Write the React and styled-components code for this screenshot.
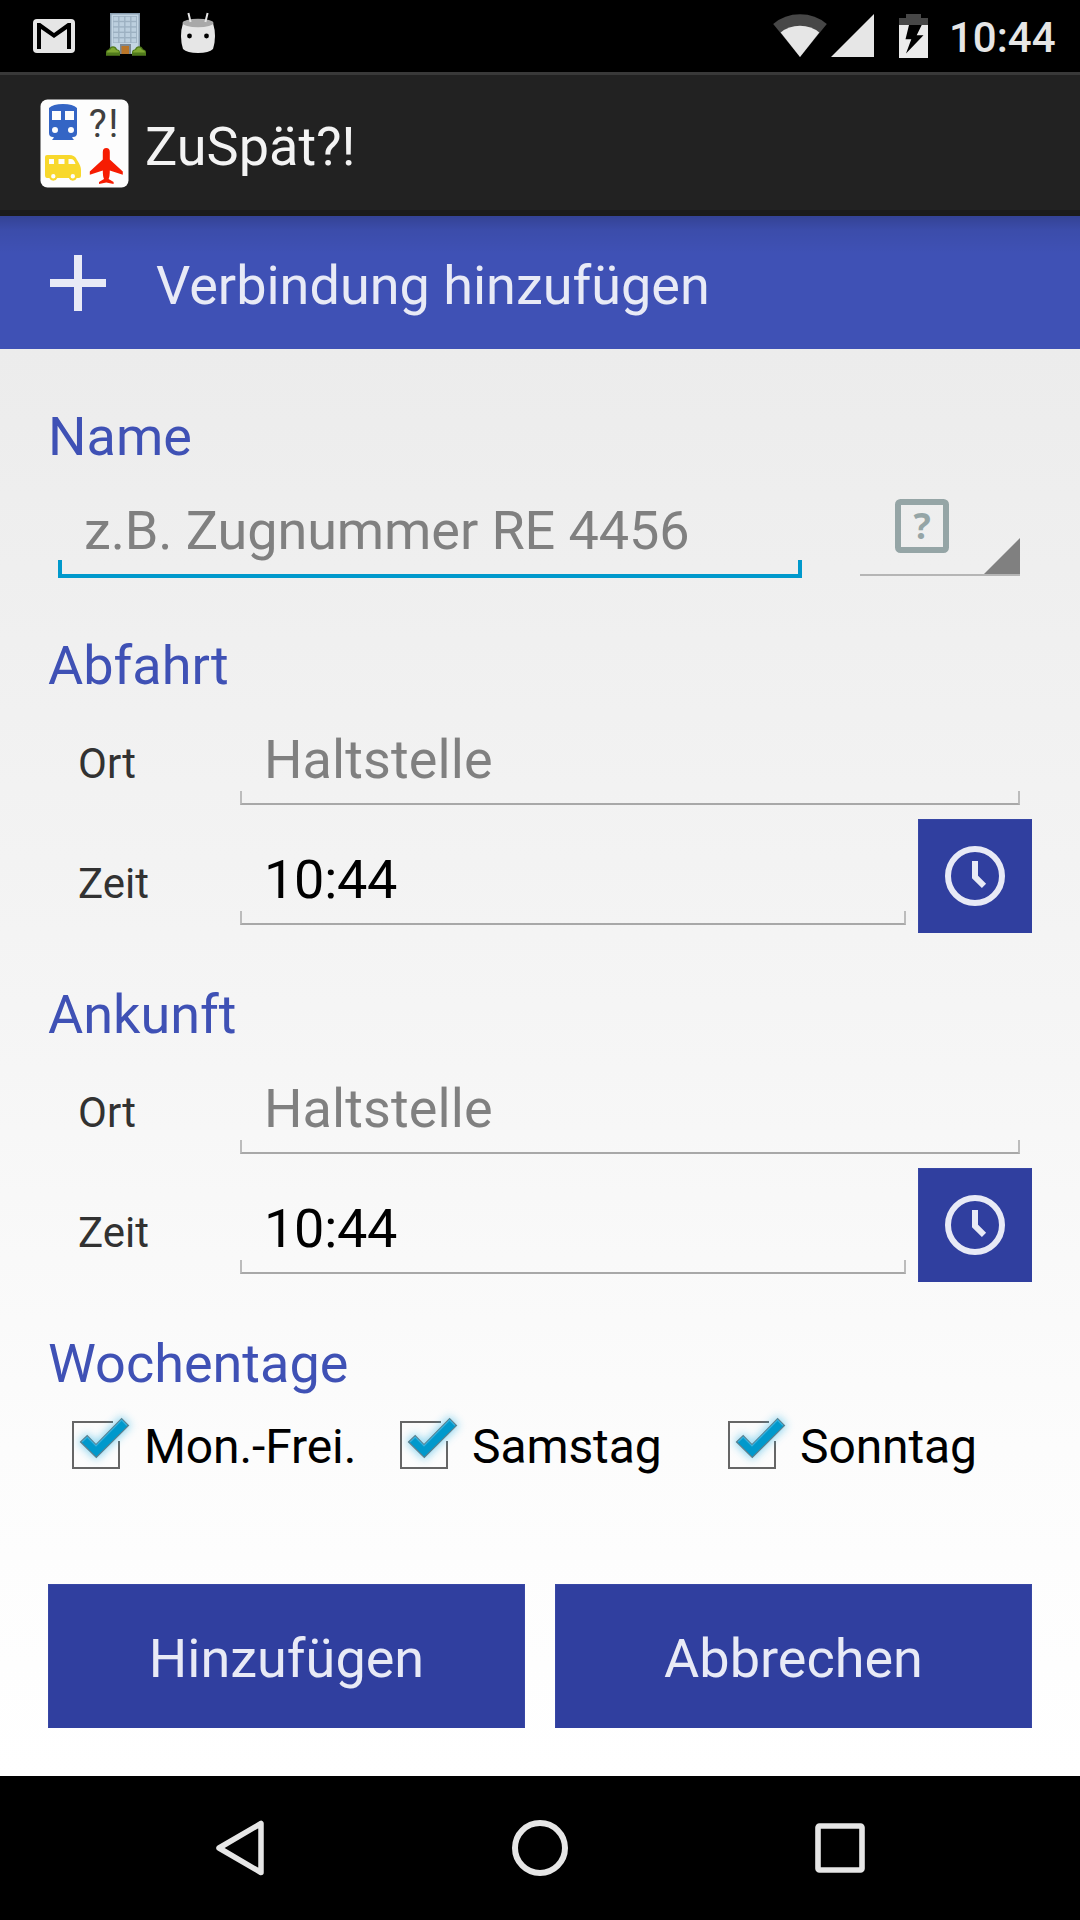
import React from "react";
import styled, { createGlobalStyle } from "styled-components";

const GlobalStyle = createGlobalStyle`
  * { box-sizing: border-box; }
  body { margin: 0; background: #000; font-family: Roboto, "Noto Sans", sans-serif; }
  svg { display: block; flex: none; }
`;

const Screen = styled.div`
  width: 1080px;
  height: 1920px;
  display: flex;
  flex-direction: column;
  overflow: hidden;
`;

const StatusBar = styled.div`
  height: 72px;
  display: flex;
  justify-content: space-between;
  padding: 0 24px 0 33px;
  background: #000;
`;

const IconGroup = styled.div`
  display: flex;
  gap: ${(p) => p.$gap}px;
`;

const Clock = styled.span`
  width: 107px;
  margin-left: -4px;
  font-size: 42px;
  font-weight: 500;
  line-height: 75px;
  color: #e6e6e6;
  white-space: nowrap;
`;

const ActionBar = styled.header`
  height: 144px;
  display: flex;
  align-items: center;
  gap: 16px;
  padding: 2px 40px 0;
  background: #222;
  border-top: 3px solid #393939;
  border-bottom: 6px solid #1b1b1b;
`;

const AppTitle = styled.h1`
  margin: 7px 0 0;
  font-size: 54px;
  font-weight: 400;
  line-height: 64px;
  color: #f3f3f3;
`;

const PageHeader = styled.div`
  height: 133px;
  display: flex;
  align-items: center;
  gap: 50px;
  padding: 0 50px;
  background: linear-gradient(rgba(0, 0, 0, 0.18), rgba(0, 0, 0, 0.06) 14px, transparent 38px) #3f51b5;
`;

const PageTitle = styled.h2`
  margin: 7px 0 0;
  font-size: 54px;
  font-weight: 400;
  line-height: 64px;
  color: #e8eaf6;
`;

const Form = styled.main`
  height: 1427px;
  padding: 55px 48px 0;
  background: linear-gradient(#ececec, #f5f5f5 46%, #fcfcfc 77%, #fff);
`;

const Section = styled.section`
  margin-bottom: ${(p) => p.$space ?? 43}px;
`;

const Heading = styled.h3`
  margin: 0;
  font-size: 54px;
  font-weight: 400;
  line-height: 65px;
  color: #3f51b5;
`;

const NameRow = styled.div`
  height: 121px;
  display: flex;
  align-items: flex-end;
  padding: 0 12px 12px 10px;
  gap: 58px;
`;

const Rows = styled.div`
  padding-top: 1px;
`;

const Row = styled.div`
  height: 120px;
  display: flex;
  align-items: flex-start;
  padding-left: 30px;
  padding-right: ${(p) => p.$right ?? 0}px;
`;

const Label = styled.label`
  width: 162px;
  padding-top: 33px;
  font-size: 42px;
  line-height: 63px;
  color: #323232;
`;

const Field = styled.div`
  position: relative;
  flex: ${(p) => (p.$width ? "none" : 1)};
  width: ${(p) => (p.$width ? `${p.$width}px` : "auto")};
  height: ${(p) => (p.$focused ? 79 : 106)}px;
  padding-top: ${(p) => (p.$focused ? 0 : 29)}px;
  padding-left: ${(p) => (p.$focused ? 26 : 24)}px;
  font-size: 54px;
  line-height: 63px;
  letter-spacing: ${(p) => p.$tracking ?? 0}px;
  white-space: nowrap;
  color: ${(p) => (p.$filled ? "#000" : "#808080")};

  &::after {
    content: "";
    position: absolute;
    left: 0;
    right: 0;
    bottom: 0;
    height: ${(p) => (p.$focused ? 14 : 12)}px;
    border: solid ${(p) => (p.$focused ? "#0099cc" : "#bcbcbc")};
    border-width: ${(p) => (p.$focused ? "0 4px 4px" : "0 2px 2px")};
    border-bottom-color: ${(p) => (p.$focused ? "#0099cc" : "#a8a8a8")};
  }
`;

const Spinner = styled.div`
  width: 160px;
  height: 79px;
`;

const ClockButton = styled.button`
  width: 114px;
  height: 114px;
  margin-left: 12px;
  padding: 0;
  border: 1px solid #3847a5;
  border-right-color: #303f9f;
  border-bottom-color: #303f9f;
  background: #303f9f;
  display: flex;
  align-items: center;
  justify-content: center;
`;

const Days = styled.div`
  height: 98px;
  display: grid;
  grid-template-columns: repeat(3, 328px);
`;

const Day = styled.label`
  display: flex;
  align-items: center;
  padding-left: 24px;
  gap: 4px;
  font-size: 48px;
  line-height: 64px;
  letter-spacing: -0.1px;
  color: #000;

  span { margin-top: 3px; }
`;

const Actions = styled.div`
  display: grid;
  grid-template-columns: 1fr 1fr;
  gap: 30px;
`;

const ActionButton = styled.button`
  height: 144px;
  border: 1px solid #3847a5;
  border-bottom-color: #303f9f;
  background: #303f9f;
  padding: 5px 0 0;
  font: 400 54px/64px Roboto, "Noto Sans", sans-serif;
  color: #e8eaf6;
`;

const NavBar = styled.nav`
  height: 144px;
  display: flex;
  align-items: center;
  justify-content: center;
  gap: 240px;
  background: #000;
`;

const GmailIcon = () => (
  <svg width="42" height="72" viewBox="33 0 42 72">
    <rect x="33" y="19" width="42" height="34" rx="4" fill="#e6e6e6" />
    <path d="M37 49V23h3.200L54 33l13.800-10H71v26h-4V29L54 38 41 29v20z" fill="#000" />
  </svg>
);

const BuildingIcon = () => (
  <svg width="44" height="72" viewBox="106 0 44 72">
    <rect x="110" y="13" width="30" height="41" fill="#8b9fb1" />
    <rect x="111.500" y="14.500" width="27" height="39" fill="#c3d5e3" />
    <rect x="113" y="16" width="24" height="27" fill="#9db1c2" />
    {[0, 1, 2, 3, 4].map((r) =>
      [0, 1, 2, 3].map((c) => (
        <rect key={`${r}-${c}`} x={113.5 + c * 6} y={16.8 + r * 5.4} width="4.600" height="4" fill="#bccfde" />
      ))
    )}
    <rect x="120" y="44" width="11" height="10" fill="#7c8893" />
    <rect x="121.500" y="46" width="7.500" height="8" fill="#b97528" />
    <path d="M106 55.800v-4q0-2 3-2.600 1-3 4-3t4 3q3 .6 3 3v3.600zM132 55.800v-3.600q0-2.400 3-3 1-3 4-3t4 3q3 .6 3 2.600v4z" fill="#507a1c" />
    <path d="M107 52.500q0-2 3-2.500 1-2.500 3-2.500t3 2.500q3 .5 3 2.500zM133 52.500q0-2 3-2.500 1-2.500 3-2.500t3 2.500q3 .5 3 2.500z" fill="#7fa832" />
  </svg>
);

const RobotIcon = () => (
  <svg width="34" height="72" viewBox="181 0 34 72">
    <path d="M183 23q-4 13 0 26 4 4 15 4t15-4q4-13 0-26z" fill="#e6e6e6" />
    <ellipse cx="198" cy="23" rx="15.500" ry="4.200" fill="#a9a9a9" />
    <path d="M188.400 13l2.200 9M207.600 13l-2.200 9" stroke="#e6e6e6" strokeWidth="2" />
    <circle cx="189.500" cy="36" r="2.400" />
    <circle cx="206.500" cy="36" r="2.400" />
  </svg>
);

const WifiIcon = () => (
  <svg width="54" height="72" viewBox="772.500 0 54 72">
    <path d="M799.500 57L772.700 24Q784 14.300 799.500 14.300T826.300 24z" fill="#474747" />
    <path d="M799.500 57L780.200 32.500Q788 25.700 799.500 25.700T818.800 32.500z" fill="#e6e6e6" />
  </svg>
);

const SignalIcon = () => (
  <svg width="43" height="72" viewBox="831 0 43 72">
    <path d="M831 57h43V14z" fill="#e6e6e6" />
  </svg>
);

const BatteryIcon = () => (
  <svg width="29" height="72" viewBox="899 0 29 72">
    <path d="M899 25.500V18h7v-4h15v4h7v7.500z" fill="#474747" />
    <path d="M899 25h29v33h-29z" fill="#ebebeb" />
    <path d="M909 25h12.700l-5 10.300h6.800L906 53.500l5.300-14.200h-5.800z" fill="#000" />
  </svg>
);

const AppIcon = () => (
  <svg width="89" height="89" viewBox="40 99 89 89">
    <rect x="40.500" y="99.500" width="88" height="88" rx="7" fill="#fdfdfd" />
    <path
      fill="#3465c5"
      fillRule="evenodd"
      d="M49 108q4-4 14-4t14 4v25q0 4-4 4l-1 .5 2 2.500H52l2-2.500-1-.5q-4 0-4-4zM52 111v9h9v-9zM65 111v9h9v-9zM55 127a3 3 0 100 6 3 3 0 000-6zM71 127a3 3 0 100 6 3 3 0 000-6z"
    />
    <text x="88.700" y="137" fontSize="38" letterSpacing="1.800" fill="#404040" fontFamily="Roboto">?!</text>
    <path
      fill="#f8d82c"
      fillRule="evenodd"
      d="M45 157q0-2 2-2h22q6 0 8 5 4 6 4 10v6q0 2-2 2h-2.200a4.300 4.300 0 01-8 0H57.300a4.300 4.300 0 01-8 0H47q-2 0-2-3zM49 159v5h5v-5zM58.500 159v5h6v-5zM68.500 159v5h7q-1.500-5-4.500-5zM53.300 174a2 2 0 100 4.400 2 2 0 000-4.400zM72.800 174a2 2 0 100 4.400 2 2 0 000-4.400z"
    />
    <path
      fill="#f61c02"
      d="M106.300 148q3.500 0 3.500 4v7.500l13 12v3.300l-13-4.300q0 6-1.200 8.500l5 3v2l-7.300-1.500-7.300 1.500v-2l5-3q-1.200-2.500-1.200-8.500l-13 4.300v-3.300l13-12V152q0-4 3.500-4z"
    />
  </svg>
);

const PlusIcon = () => (
  <svg width="56" height="56" viewBox="0 0 56 56">
    <path d="M24 0h8v24h24v8H32v24h-8V32H0v-8h24z" fill="#e8eaf6" />
  </svg>
);

const SpinnerArt = () => (
  <svg width="160" height="79" viewBox="860 499 160 79">
    <rect x="898" y="502" width="48" height="48" rx="2.500" fill="none" stroke="#95a5a6" strokeWidth="6" />
    <text x="922.200" y="538.700" fontSize="36" fontWeight="700" textAnchor="middle" fill="#95a5a6" fontFamily="Noto Sans">?</text>
    <path d="M984 574l36-36v36z" fill="#808080" />
    <path d="M860 574h160v2H860z" fill="#b5b5b5" />
  </svg>
);

const ClockIcon = () => (
  <svg width="60" height="60" viewBox="0 0 60 60" fill="none" stroke="#e8eaf6" strokeWidth="6">
    <circle cx="30" cy="30" r="27" />
    <path d="M30 15v16l9 8.800" />
  </svg>
);

const CheckIcon = () => (
  <svg width="68" height="74" viewBox="0 0 68 74" fill="none">
    <defs>
      <filter id="glow" x="-50%" y="-50%" width="200%" height="200%">
        <feGaussianBlur stdDeviation="4.500" />
      </filter>
    </defs>
    <path d="M41 14H1v46h46V33" stroke="#666" strokeWidth="2" />
    <path d="M8 34l7-7 9 9 25.500-26 7.500 7.500L24.300 50z" fill="#33b5e5" stroke="#33b5e5" strokeWidth="3" opacity=".55" filter="url(#glow)" />
    <path d="M8.500 34l6.700-6.300 8.800 9L49.600 10.700l6.900 6.900L24.300 49.500z" fill="#0099cc" stroke="#5f7f8c" strokeWidth="1.200" />
    <path d="M10 34l5.200-5 8.800 9L49.600 12.200l5.300 5.300" stroke="#36b0dc" strokeWidth="1.200" />
  </svg>
);

const BackIcon = () => (
  <svg width="60" height="60" viewBox="210 1818 60 60" fill="none" stroke="#e6e6e6" strokeWidth="5.500" strokeLinejoin="round">
    <path d="M261 1823.500v49L219 1848z" />
  </svg>
);

const HomeIcon = () => (
  <svg width="60" height="60" viewBox="0 0 60 60" fill="none" stroke="#e6e6e6" strokeWidth="6">
    <circle cx="30" cy="30" r="25" />
  </svg>
);

const RecentIcon = () => (
  <svg width="60" height="60" viewBox="0 0 60 60" fill="none" stroke="#e6e6e6" strokeWidth="5.600">
    <rect x="8" y="8" width="44" height="44" rx="1.500" />
  </svg>
);

const StopSection = ({ title }) => (
  <Section>
    <Heading>{title}</Heading>
    <Rows>
      <Row $right={12}>
        <Label>Ort</Label>
        <Field $tracking={0.1}>Haltstelle</Field>
      </Row>
      <Row>
        <Label>Zeit</Label>
        <Field $width={666} $tracking={-0.25} $filled>10:44</Field>
        <ClockButton aria-label="Zeit">
          <ClockIcon />
        </ClockButton>
      </Row>
    </Rows>
  </Section>
);

export default function App() {
  return (
    <>
      <GlobalStyle />
      <Screen>
        <StatusBar>
          <IconGroup $gap={31}>
            <GmailIcon />
            <BuildingIcon />
            <RobotIcon />
          </IconGroup>
          <IconGroup $gap={25}>
            <IconGroup $gap={4.5}>
              <WifiIcon />
              <SignalIcon />
            </IconGroup>
            <BatteryIcon />
            <Clock>10:44</Clock>
          </IconGroup>
        </StatusBar>
        <ActionBar>
          <AppIcon />
          <AppTitle>ZuSpät?!</AppTitle>
        </ActionBar>
        <PageHeader>
          <PlusIcon />
          <PageTitle>Verbindung hinzufügen</PageTitle>
        </PageHeader>
        <Form>
          <Section>
            <Heading>Name</Heading>
            <NameRow>
              <Field $focused $width={744} $tracking={-0.1}>z.B. Zugnummer RE 4456</Field>
              <Spinner>
                <SpinnerArt />
              </Spinner>
            </NameRow>
          </Section>
          <StopSection title="Abfahrt" />
          <StopSection title="Ankunft" />
          <Section $space={90}>
            <Heading>Wochentage</Heading>
            <Days>
              {["Mon.-Frei.", "Samstag", "Sonntag"].map((day) => (
                <Day key={day}>
                  <CheckIcon />
                  <span>{day}</span>
                </Day>
              ))}
            </Days>
          </Section>
          <Actions>
            <ActionButton>Hinzufügen</ActionButton>
            <ActionButton>Abbrechen</ActionButton>
          </Actions>
        </Form>
        <NavBar>
          <BackIcon />
          <HomeIcon />
          <RecentIcon />
        </NavBar>
      </Screen>
    </>
  );
}
